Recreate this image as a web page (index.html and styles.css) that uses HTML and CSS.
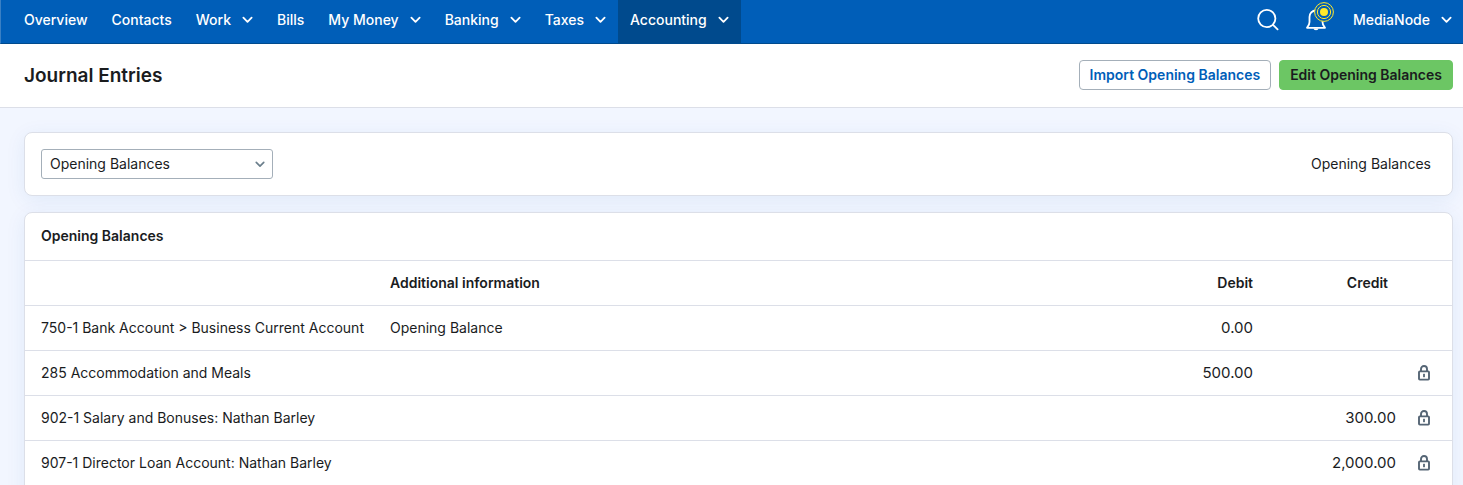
FILE: index.html
```html
<!DOCTYPE html>
<html lang="en">
<head>
  <meta charset="UTF-8" />
  <title>Journal Entries</title>
  <meta name="viewport" content="width=device-width, initial-scale=1.0" />
  <link rel="stylesheet" href="styles.css">
</head>
<body>
  <!-- Shared icons -->
  <svg class="sprite" aria-hidden="true">
    <symbol id="chevron" viewBox="0 0 12 8">
      <path d="M1.5 1.5 L6 6 L10.5 1.5" fill="none" stroke="currentColor" stroke-width="2" stroke-linecap="round" stroke-linejoin="round" />
    </symbol>
    <symbol id="lock" viewBox="0 0 12 16">
      <path d="M3 6.5 V4 a3 3 0 0 1 6 0 V6.5" fill="none" stroke="currentColor" stroke-width="1.9" />
      <rect x="1" y="6.4" width="10" height="8.2" rx="0.8" fill="none" stroke="currentColor" stroke-width="1.9" />
      <rect x="5.1" y="8.8" width="1.8" height="3.4" fill="currentColor" />
    </symbol>
  </svg>

  <!-- Navigation -->
  <nav class="navbar">
    <div class="nav-links">
      <a class="nav-item" href="#">Overview</a>
      <a class="nav-item" href="#">Contacts</a>
      <button class="nav-item" type="button">Work <svg class="chevron"><use href="#chevron" /></svg></button>
      <a class="nav-item" href="#">Bills</a>
      <button class="nav-item" type="button">My Money <svg class="chevron"><use href="#chevron" /></svg></button>
      <button class="nav-item" type="button">Banking <svg class="chevron"><use href="#chevron" /></svg></button>
      <button class="nav-item" type="button">Taxes <svg class="chevron"><use href="#chevron" /></svg></button>
      <button class="nav-item active" type="button">Accounting <svg class="chevron"><use href="#chevron" /></svg></button>
    </div>
    <div class="nav-tools">
      <button class="icon-button" type="button" aria-label="Search">
        <svg width="24" height="24" viewBox="0 0 24 24" fill="none" stroke="currentColor" stroke-width="1.8" stroke-linecap="round">
          <circle cx="10.8" cy="10.5" r="8.6" />
          <path d="M17 16.8 L21.6 21.4" />
        </svg>
      </button>
      <button class="icon-button" type="button" aria-label="Notifications">
        <svg width="24" height="24" viewBox="0 0 24 24" fill="none" stroke="currentColor" stroke-width="1.8" stroke-linejoin="round">
          <path d="M12 2.5 C8 2.5 5.5 5.3 5.5 9 V14 C5.5 16.5 4.5 17.5 3 19.8 H21 C19.5 17.5 18.5 16.5 18.5 14 V9 C18.5 5.3 16 2.5 12 2.5 Z" />
          <path d="M9.5 20.5 a2.5 1.8 0 0 0 5 0 Z" fill="currentColor" stroke="none" />
        </svg>
        <svg class="pulse" width="20" height="20" viewBox="0 0 20 20" fill="none" stroke="#ffe92b">
          <circle cx="10" cy="10" r="9.4" fill="#005eb8" stroke-width="1" />
          <circle cx="10" cy="10" r="6.6" stroke-width="1" />
          <circle cx="10" cy="10" r="4" fill="#ffe92b" stroke="none" />
        </svg>
      </button>
      <button class="nav-item" type="button">MediaNode <svg class="chevron"><use href="#chevron" /></svg></button>
    </div>
  </nav>

  <!-- Page header -->
  <header class="page-header">
    <h1>Journal Entries</h1>
    <div class="actions">
      <button class="button" type="button">Import Opening Balances</button>
      <button class="button primary" type="button">Edit Opening Balances</button>
    </div>
  </header>

  <main class="content">
    <div class="card filter">
      <div class="select">
        <select id="period" aria-label="Period">
          <option>Opening Balances</option>
        </select>
        <svg class="select-arrow"><use href="#chevron" /></svg>
      </div>
      <label for="period">Opening Balances</label>
    </div>

    <section class="card balances">
      <h2>Opening Balances</h2>
      <table class="entries">
        <thead>
          <tr>
            <th class="account"></th>
            <th>Additional information</th>
            <th class="debit">Debit</th>
            <th class="credit">Credit</th>
            <th class="status"></th>
          </tr>
        </thead>
        <tbody>
          <tr>
            <td>750-1 Bank Account &gt; Business Current Account</td>
            <td>Opening Balance</td>
            <td class="debit">0.00</td>
            <td class="credit"></td>
            <td class="status"></td>
          </tr>
          <tr>
            <td>285 Accommodation and Meals</td>
            <td></td>
            <td class="debit">500.00</td>
            <td class="credit"></td>
            <td class="status"><svg class="lock"><use href="#lock" /></svg></td>
          </tr>
          <tr>
            <td>902-1 Salary and Bonuses: Nathan Barley</td>
            <td></td>
            <td class="debit"></td>
            <td class="credit">300.00</td>
            <td class="status"><svg class="lock"><use href="#lock" /></svg></td>
          </tr>
          <tr>
            <td>907-1 Director Loan Account: Nathan Barley</td>
            <td></td>
            <td class="debit"></td>
            <td class="credit">2,000.00</td>
            <td class="status"><svg class="lock"><use href="#lock" /></svg></td>
          </tr>
        </tbody>
      </table>
    </section>
  </main>
</body>
</html>
```
FILE: styles.css
```css
/* ===== Base ===== */
* {
  box-sizing: border-box;
}
body {
  margin: 0;
  font-family: Inter, "Liberation Sans", sans-serif;
  font-size: 14px;
  line-height: 20px;
  background: #f2f6ff;
  color: #1a1c1e;
}
button, select {
  font: inherit;
  color: inherit;
  cursor: pointer;
}
.sprite {
  display: none;
}

/* ===== Navigation ===== */
.navbar {
  display: flex;
  justify-content: space-between;
  height: 44px;
  padding: 0 0 0 11px;
  background: #005eb8;
  border-left: 1px solid #3a80c4;
  border-bottom: 1px solid #004a8d;
  color: white;
}
.nav-links, .nav-tools {
  display: flex;
}
.nav-item {
  display: flex;
  align-items: center;
  gap: 11px;
  padding: 0 12px 3px;
  border: none;
  background: none;
  color: white;
  font-weight: 500;
  text-decoration: none;
}
.nav-item.active {
  background: #004a8d;
}
.chevron {
  width: 11px;
  height: 8px;
}
.nav-tools .nav-item {
  padding-left: 13px;
  padding-right: 11px;
}
.icon-button {
  position: relative;
  width: 48px;
  padding: 0 0 3px;
  border: none;
  background: none;
  color: white;
}
.icon-button svg {
  display: block;
  margin: auto;
}
.icon-button .pulse {
  position: absolute;
  top: 2px;
  right: 6px;
}

/* ===== Page header ===== */
.page-header {
  display: flex;
  justify-content: space-between;
  align-items: flex-start;
  height: 64px;
  padding: 16px 10px 16px 24px;
  background: white;
  border-bottom: 1px solid #dcdfe8;
}
h1 {
  margin: 0;
  font-size: 19px;
  font-weight: 600;
  line-height: 32px;
}
.actions {
  display: flex;
  gap: 8px;
}
.button {
  height: 30px;
  padding: 0 10px;
  border: 1px solid #a4afb9;
  border-radius: 4px;
  background: white;
  color: #005eb8;
  font-weight: 600;
}
.button.primary {
  border-color: #6cc664;
  background: #6cc664;
  color: #1a1c1e;
}

/* ===== Cards ===== */
.content {
  display: flex;
  flex-direction: column;
  gap: 16px;
  padding: 24px 10px 24px 24px;
}
.card {
  background: white;
  border: 1px solid #dcdfe8;
  border-radius: 8px;
  box-shadow: 0 4px 20px rgba(0, 94, 184, 0.08);
}
.filter {
  display: flex;
  justify-content: space-between;
  align-items: center;
  padding: 16px 21px 16px 16px;
}
.balances {
  padding-bottom: 16px;
}
.select {
  position: relative;
  width: 232px;
}
.select select {
  display: block;
  width: 100%;
  height: 30px;
  padding: 0 28px 0 8px;
  border: 1px solid #a4afb9;
  border-radius: 3px;
  background: white;
  appearance: none;
}
.select-arrow {
  position: absolute;
  top: 12px;
  right: 8px;
  width: 10px;
  height: 7px;
  color: #6b7f8c;
  pointer-events: none;
}
h2 {
  margin: 0;
  padding: 13px 16px 14px;
  font-size: 14px;
  font-weight: 600;
}

/* ===== Entries table ===== */
.entries {
  width: 100%;
  border-collapse: collapse;
  table-layout: fixed;
}
.entries th, .entries td {
  height: 45px;
  padding: 0 16px;
  border-top: 1px solid #dcdfe8;
  text-align: left;
  white-space: nowrap;
}
.entries th {
  font-weight: 600;
}
.entries .account {
  width: 349px;
}
.entries .debit, .entries .credit {
  width: 143px;
  text-align: right;
}
.entries td.debit, .entries td.credit {
  font-size: 15px;
}
.entries th.credit {
  padding-right: 24px;
}
.entries .status {
  width: 40px;
  padding: 0;
}
.lock {
  display: block;
  width: 12px;
  height: 16px;
  margin-left: 6px;
  color: #556575;
}
```
